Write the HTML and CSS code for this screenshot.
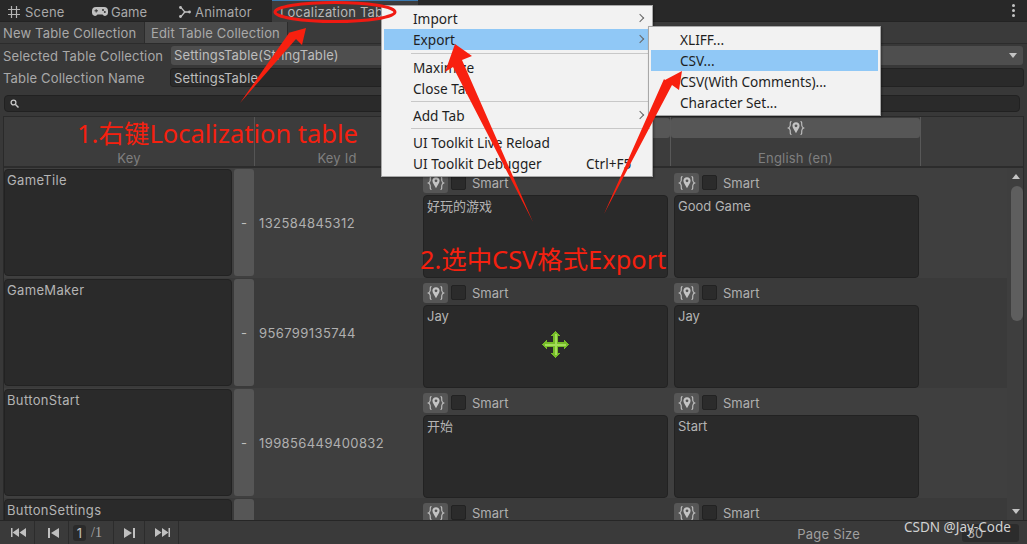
FILE: index.html
```html
<!DOCTYPE html>
<html lang="zh">
<head>
  <meta charset="UTF-8" />
  <title>Localization Tables</title>
  <link rel="stylesheet" href="styles.css">
</head>
<body>

  <svg class="defs" width="0" height="0">
    <symbol id="smart" viewBox="0 0 18 16">
      <path d="M4.500 1.500C2.800 1.500 3.400 3.500 3.200 5.500 3 7 2.400 7.600 1.400 8c1 .4 1.600 1 1.800 2.500.2 2-.4 4 1.300 4M13.500 1.500c1.700 0 1.100 2 1.300 4 .2 1.500.8 2.100 1.800 2.500-1 .4-1.600 1-1.800 2.500-.2 2 .4 4-1.300 4" fill="none" stroke="#c4c4c4" stroke-width="1.100"/>
      <path d="M9 2.200c-2.200 0-3.600 1.600-3.600 3.500 0 2.400 2.300 4.600 3.600 7.500 1.300-2.900 3.600-5.100 3.600-7.500 0-1.900-1.400-3.500-3.600-3.500z" fill="#c4c4c4"/>
      <circle cx="9" cy="5.800" r="1.400" fill="#555"/>
    </symbol>
  </svg>

  <!-- TABS -->
  <div class="tabs">
    <div class="tab tab-scene">
      <svg class="tab-icon" width="12" height="12" viewBox="0 0 12 12"><path d="M3.500 0v12M8.500 0v12M0 3.500h12M0 8.500h12" stroke="#b4b4b4" stroke-width="1.200"/></svg>
      Scene
    </div>
    <div class="tab tab-game">
      <svg class="tab-icon" width="16" height="10" viewBox="0 0 16 10"><path d="M4 0h8a4 4 0 0 1 4 4v2a3 3 0 0 1-5.500 1.500h-5A3 3 0 0 1 0 6V4a4 4 0 0 1 4-4z" fill="#c0c0c0"/><path d="M2.500 3.800h3.500M4.200 2.200v3.300" stroke="#333" stroke-width="1"/><circle cx="11" cy="3" r="1" fill="#333"/><circle cx="12.800" cy="5" r="1" fill="#333"/></svg>
      Game
    </div>
    <div class="tab tab-animator">
      <svg class="tab-icon" width="12" height="12" viewBox="0 0 12 12"><path d="M1 1.500c3 0 3 4.500 5.500 4.500H11M1 10.500C4 10.500 4 6 6.500 6" fill="none" stroke="#c0c0c0" stroke-width="1.300"/><circle cx="1.500" cy="1.500" r="1.400" fill="#c0c0c0"/><circle cx="1.500" cy="10.500" r="1.400" fill="#c0c0c0"/><circle cx="10.500" cy="6" r="1.400" fill="#c0c0c0"/></svg>
      Animator
    </div>
    <div class="tab tab-active">Localization Tables</div>
    <div class="kebab"><i></i><i></i><i></i></div>
  </div>

  <!-- TOOLBAR -->
  <div class="toolbar">
    <div class="tool-btn">New Table Collection</div>
    <div class="tool-btn tool-on">Edit Table Collection</div>
  </div>

  <div class="form-row form-first">
    <label>Selected Table Collection</label>
    <div class="select">SettingsTable(StringTable)<span class="caret"></span></div>
  </div>
  <div class="form-row">
    <label>Table Collection Name</label>
    <div class="input">SettingsTable</div>
  </div>

  <div class="search">
    <svg width="9" height="9" viewBox="0 0 9 9"><circle cx="3.500" cy="3.500" r="2.400" fill="none" stroke="#c8c8c8" stroke-width="1.300"/><path d="M5.500 5.500L8.500 8.500" stroke="#c8c8c8" stroke-width="1.500"/></svg>
  </div>

  <!-- TABLE -->
  <div class="table">
    <div class="head">
      <div class="head-cell head-key"><span>Key</span></div>
      <div class="head-cell head-id"><span>Key Id</span></div>
      <div class="head-cell head-loc">
        <div class="head-btn"><svg width="18" height="16"><use href="#smart"/></svg></div>
      </div>
      <div class="head-cell head-loc">
        <div class="head-btn"><svg width="18" height="16"><use href="#smart"/></svg></div>
        <span>English (en)</span>
      </div>
    </div>

    <div class="body">
      <div class="rows">
        <div class="row">
          <div class="key">GameTile</div>
          <div class="minus">-</div>
          <div class="key-id">132584845312</div>
          <div class="loc">
            <div class="loc-top"><div class="smart-btn"><svg width="18" height="16"><use href="#smart"/></svg></div><div class="check"></div>Smart</div>
            <div class="area">好玩的游戏</div>
          </div>
          <div class="loc">
            <div class="loc-top"><div class="smart-btn"><svg width="18" height="16"><use href="#smart"/></svg></div><div class="check"></div>Smart</div>
            <div class="area">Good Game</div>
          </div>
        </div>
        <div class="row row-alt">
          <div class="key">GameMaker</div>
          <div class="minus">-</div>
          <div class="key-id">956799135744</div>
          <div class="loc">
            <div class="loc-top"><div class="smart-btn"><svg width="18" height="16"><use href="#smart"/></svg></div><div class="check"></div>Smart</div>
            <div class="area">Jay</div>
          </div>
          <div class="loc">
            <div class="loc-top"><div class="smart-btn"><svg width="18" height="16"><use href="#smart"/></svg></div><div class="check"></div>Smart</div>
            <div class="area">Jay</div>
          </div>
        </div>
        <div class="row">
          <div class="key">ButtonStart</div>
          <div class="minus">-</div>
          <div class="key-id">199856449400832</div>
          <div class="loc">
            <div class="loc-top"><div class="smart-btn"><svg width="18" height="16"><use href="#smart"/></svg></div><div class="check"></div>Smart</div>
            <div class="area">开始</div>
          </div>
          <div class="loc">
            <div class="loc-top"><div class="smart-btn"><svg width="18" height="16"><use href="#smart"/></svg></div><div class="check"></div>Smart</div>
            <div class="area">Start</div>
          </div>
        </div>
        <div class="row row-alt">
          <div class="key">ButtonSettings</div>
          <div class="minus"></div>
          <div class="key-id"></div>
          <div class="loc">
            <div class="loc-top"><div class="smart-btn"><svg width="18" height="16"><use href="#smart"/></svg></div><div class="check"></div>Smart</div>
          </div>
          <div class="loc">
            <div class="loc-top"><div class="smart-btn"><svg width="18" height="16"><use href="#smart"/></svg></div><div class="check"></div>Smart</div>
          </div>
        </div>
      </div>
      <div class="scrollbar">
        <span class="arrow-up"></span>
        <div class="thumb"></div>
        <span class="arrow-down"></span>
      </div>
    </div>
  </div>

  <!-- PAGER -->
  <div class="pager">
    <div class="page-btn page-start"><svg width="16" height="9" viewBox="0 0 16 9"><path d="M8 0v9L1.500 4.500zM15 0v9L8.500 4.500z" fill="#c0c0c0"/><path d="M0 0h1.500v9H0z" fill="#c0c0c0"/></svg></div>
    <div class="page-btn page-start"><svg width="11" height="10" viewBox="0 0 11 10"><path d="M0 0h2v10H0zM11 0v10L3 5z" fill="#c0c0c0"/></svg></div>
    <div class="page-num"><span class="page-now">1</span><em>/1</em></div>
    <div class="page-btn page-short"><svg width="11" height="10" viewBox="0 0 11 10"><path d="M9 0h2v10H9zM0 0v10l8-5z" fill="#c0c0c0"/></svg></div>
    <div class="page-btn"><svg width="16" height="9" viewBox="0 0 16 9"><path d="M1 0v9l6.500-4.500zM8 0v9l6.500-4.500z" fill="#c0c0c0"/><path d="M14.500 0H16v9h-1.500z" fill="#c0c0c0"/></svg></div>
    <div class="page-size">Page Size</div>
    <div class="page-input">30</div>
  </div>

  <!-- CONTEXT MENU -->
  <div class="menu menu-main">
    <div class="item more">Import</div>
    <div class="item more on">Export</div>
    <div class="sep"></div>
    <div class="item">Maximize</div>
    <div class="item">Close Tab</div>
    <div class="sep"></div>
    <div class="item more">Add Tab</div>
    <div class="sep"></div>
    <div class="item">UI Toolkit Live Reload</div>
    <div class="item">UI Toolkit Debugger<span class="short">Ctrl+F5</span></div>
  </div>
  <div class="menu menu-sub">
    <div class="item">XLIFF...</div>
    <div class="item on">CSV...</div>
    <div class="item">CSV(With Comments)...</div>
    <div class="item">Character Set...</div>
  </div>

  <!-- move cursor -->
  <svg class="cursor" width="27" height="27" viewBox="0 0 27 27" shape-rendering="crispEdges">
    <polygon points="13.500,0 18,5 16,5 16,11 22,11 22,9 27,13.500 22,18 22,16 16,16 16,22 18,22 13.500,27 9,22 11,22 11,16 5,16 5,18 0,13.500 5,9 5,11 11,11 11,5 9,5" fill="#76bd28"/>
    <path d="M12.500 3h2v9.500H24v2h-9.500V24h-2v-9.500H3v-2h9.500z" fill="#a2dd58"/>
  </svg>

  <!-- ANNOTATIONS -->
  <svg class="marks" width="1027" height="544" viewBox="0 0 1027 544">
    <ellipse cx="335" cy="12" rx="60" ry="9.500" fill="none" stroke="#f01a12" stroke-width="3"/>
    <polygon points="306,28 302,45 296,39 240,103 289,33 288,33" fill="#f8200f"/>
    <polygon points="455,44 472,56 462,60 533,222 453,67 445,72" fill="#f8200f"/>
    <polygon points="682,71 679,90 672,85 604,214 664,79 665,80" fill="#f8200f"/>
  </svg>
  <div class="note note-one">1.右键Localization table</div>
  <div class="note note-two">2.选中CSV格式Export</div>
  <div class="mark">CSDN @Jay-Code</div>

</body>
</html>
```

FILE: styles.css
```css
* { margin: 0; padding: 0; box-sizing: border-box; }
html, body {
  width: 100%;
  height: 100%;
  overflow: hidden;
  background: #383838;
  color: #a9a9a9;
  font-family: Inter, "Noto Sans CJK SC", sans-serif;
  font-size: 13px;
}
body { position: relative; }
.defs { position: absolute; }

/* TABS */
.tabs {
  height: 22px;
  display: flex;
  align-items: center;
  background: #282828;
  border-bottom: 1px solid #232323;
  white-space: nowrap;
}
.tab { display: flex; align-items: center; height: 22px; padding-top: 2px; flex-shrink: 0; letter-spacing: .2px; }
.tab-scene { width: 92px; padding-left: 8px; }
.tab-game { width: 86px; letter-spacing: 0; }
.tab-animator { width: 94px; }
.tab-icon { margin-right: 5px; flex-shrink: 0; }
.tab-scene .tab-icon { margin-right: 5px; }
.tab-game .tab-icon { margin-right: 3px; }
.tab-animator .tab-icon { margin-left: 1px; margin-right: 4px; }
.tab-active {
  width: 146px;
  overflow: hidden;
  background: #3c3c3c;
  border-top: 1px solid #3a79b0;
  padding-left: 8px;
  color: #b8b8b8;
}
.kebab {
  margin-left: auto;
  margin-right: 12px;
  display: flex;
  flex-direction: column;
  gap: 2px;
}
.kebab i { width: 3px; height: 3px; border-radius: 50%; background: #c4c4c4; }

/* TOOLBAR */
.toolbar {
  display: flex;
  height: 22px;
  background: #3a3a3a;
  border-bottom: 1px solid #2c2c2c;
  letter-spacing: .17px;
}
.tool-btn {
  width: 145px;
  padding-left: 3px;
  line-height: 22px;
  border-right: 1px solid #2c2c2c;
}
.tool-on { width: 143px; padding-left: 6px; background: #4a4a4a; }

.form-row {
  display: flex;
  align-items: center;
  height: 19px;
  margin-top: 3px;
  padding: 0 3px;
}
.form-first { margin-top: 2px; }
.form-row label { width: 167px; flex-shrink: 0; letter-spacing: .17px; }
.select, .input {
  flex: 1;
  height: 19px;
  line-height: 18px;
  padding-left: 3px;
  border-radius: 3px;
  color: #bdbdbd;
  letter-spacing: .15px;
  position: relative;
}
.select { background: #4e4e4e; margin-left: 1px; margin-right: 1px; }
.input { background: #2a2a2a; border: 1px solid #222; }
.caret {
  position: absolute;
  right: 6px;
  top: 7px;
  border: 4px solid transparent;
  border-top: 5px solid #c4c4c4;
  border-bottom: 0;
}

.search {
  display: flex;
  align-items: center;
  height: 17px;
  margin: 8px 7px 0 4px;
  padding-left: 5px;
  background: #2a2a2a;
  border: 1px solid #212121;
  border-radius: 4px;
}

/* TABLE */
.table {
  height: 404px;
  margin: 4px 3px 0;
  border: 1px solid #2a2a2a;
  border-bottom: 0;
  overflow: hidden;
}
.head {
  display: grid;
  grid-template-columns: 251px 165px 251px 250px 1fr;
  height: 51px;
  background: #3c3c3c;
  border-bottom: 2px solid #2c2c2c;
}
.head-cell {
  display: flex;
  flex-direction: column;
  align-items: center;
  justify-content: flex-end;
  border-right: 1px solid #585858;
  color: #7f7f7f;
  letter-spacing: .2px;
}
.head-key, .head-id { border-right-color: #555; }
.head-loc { justify-content: space-between; padding-top: 1px; }
.head-btn {
  width: 100%;
  height: 20px;
  display: flex;
  align-items: center;
  justify-content: center;
  background: #565656;
  border-radius: 3px;
}
.body { display: flex; height: 352px; }
.rows { flex: 1; overflow: hidden; }
.row {
  display: grid;
  grid-template-columns: 229px 21px 168px 251px 246px;
  height: 110px;
  background: #3f3f3f;
  overflow: hidden;
}
.row-alt { background: #3a3a3a; }
.key {
  margin: 1px 1px 2px 0;
  padding: 2px;
  background: #2a2a2a;
  border: 1px solid #222;
  border-radius: 4px;
  color: #b4b4b4;
  letter-spacing: .35px;
}
.minus {
  margin: 1px 0 2px 1px;
  display: flex;
  align-items: center;
  justify-content: center;
  background: #565656;
  border-radius: 3px;
  color: #c0c0c0;
}
.key-id { display: flex; align-items: center; padding-left: 5px; color: #b0b0b0; letter-spacing: .4px; }
.loc { display: flex; flex-direction: column; padding-left: 1px; }
.loc-top {
  display: flex;
  align-items: center;
  height: 27px;
  flex-shrink: 0;
  padding-top: 2px;
  color: #b0b0b0;
}
.smart-btn {
  width: 25px;
  height: 20px;
  display: flex;
  align-items: center;
  justify-content: center;
  background: #565656;
  border-radius: 3px;
}
.check {
  width: 15px;
  height: 15px;
  margin: 0 6px 0 3px;
  background: #2b2b2b;
  border: 1px solid #222;
  border-radius: 2px;
}
.area {
  width: 245px;
  height: 83px;
  padding: 2px 3px;
  line-height: 16px;
  background: #2a2a2a;
  border: 1px solid #222;
  border-radius: 4px;
  color: #b4b4b4;
}
.scrollbar {
  width: 16px;
  position: relative;
  background: #3e3e3e;
  flex-shrink: 0;
}
.arrow-up, .arrow-down {
  position: absolute;
  left: 5px;
  border: 4px solid transparent;
}
.arrow-up { top: 6px; border-bottom: 5px solid #c4c4c4; border-top: 0; }
.arrow-down { bottom: 6px; border-top: 5px solid #c4c4c4; border-bottom: 0; }
.thumb {
  width: 12px;
  height: 135px;
  margin: 18px 0 0 4px;
  background: #5e5e5e;
  border-radius: 6px;
}

/* PAGER */
.pager {
  display: flex;
  align-items: center;
  height: 24px;
  background: #3a3a3a;
  border-top: 1px solid #262626;
}
.page-btn {
  width: 35px;
  height: 23px;
  display: flex;
  align-items: center;
  justify-content: center;
  border-right: 1px solid #2c2c2c;
}
.page-btn + .page-btn { width: 34px; }
.page-btn.page-short { width: 31px; }
.page-start { padding-left: 3px; }
.page-num {
  width: 45px;
  height: 23px;
  display: flex;
  align-items: center;
  padding-left: 4px;
  border-right: 1px solid #2c2c2c;
}
.page-num em { margin-left: 5px; font-style: normal; font-family: "Liberation Serif", serif; font-size: 14px; }
.page-now {
  width: 13px;
  height: 16px;
  line-height: 16px;
  text-align: center;
  background: #2a2a2a;
  border-radius: 3px;
  color: #c0c0c0;
}
.page-size { margin-left: auto; margin-right: 102px; padding-top: 3px; color: #a0a0a0; letter-spacing: .2px; }
.page-input {
  width: 57px;
  height: 18px;
  margin-right: 8px;
  padding-left: 5px;
  line-height: 19px;
  background: #2c2c2c;
  border-radius: 3px;
}

/* MENU */
.menu {
  position: absolute;
  background: #f2f2f2;
  border: 1px solid #a8a8a8;
  box-shadow: 1px 1px 2px rgba(0,0,0,.35);
  color: #1f1f1f;
  font-family: "Noto Sans", sans-serif;
  font-size: 13.65px;
}
.menu-main { left: 381px; top: 5px; width: 272px; height: 172px; padding: 2px; }
.menu-sub { left: 648px; top: 26px; width: 233px; height: 90px; padding: 2px; }
.item {
  position: relative;
  height: 21px;
  line-height: 22px;
  padding-left: 29px;
  white-space: nowrap;
}
.item.on { background: #90c8f6; }
.more::after {
  content: "";
  position: absolute;
  right: 7px;
  top: 7px;
  width: 5px;
  height: 5px;
  border-top: 1px solid #666;
  border-right: 1px solid #666;
  transform: rotate(45deg);
}
.short { position: absolute; left: 202px; }
.sep { height: 1px; margin: 2px 0 3px 27px; background: #c8c8c8; }
.on + .sep { margin-top: 3px; }

/* OVERLAYS */
.cursor { position: absolute; left: 542px; top: 331px; }
.marks { position: absolute; left: 0; top: 0; }
.note {
  position: absolute;
  color: #f5200f;
  font-family: "Noto Sans", "Noto Sans CJK SC", sans-serif;
  white-space: nowrap;
}
.note-one { left: 77px; top: 114px; font-size: 25.5px; line-height: 38px; }
.note-two { left: 420px; top: 241px; font-size: 25.4px; line-height: 36px; }
.mark {
  position: absolute;
  left: 904px;
  top: 518px;
  color: #d2d2d2;
  font-family: "Noto Sans", sans-serif;
  font-size: 13.5px;
}
```
